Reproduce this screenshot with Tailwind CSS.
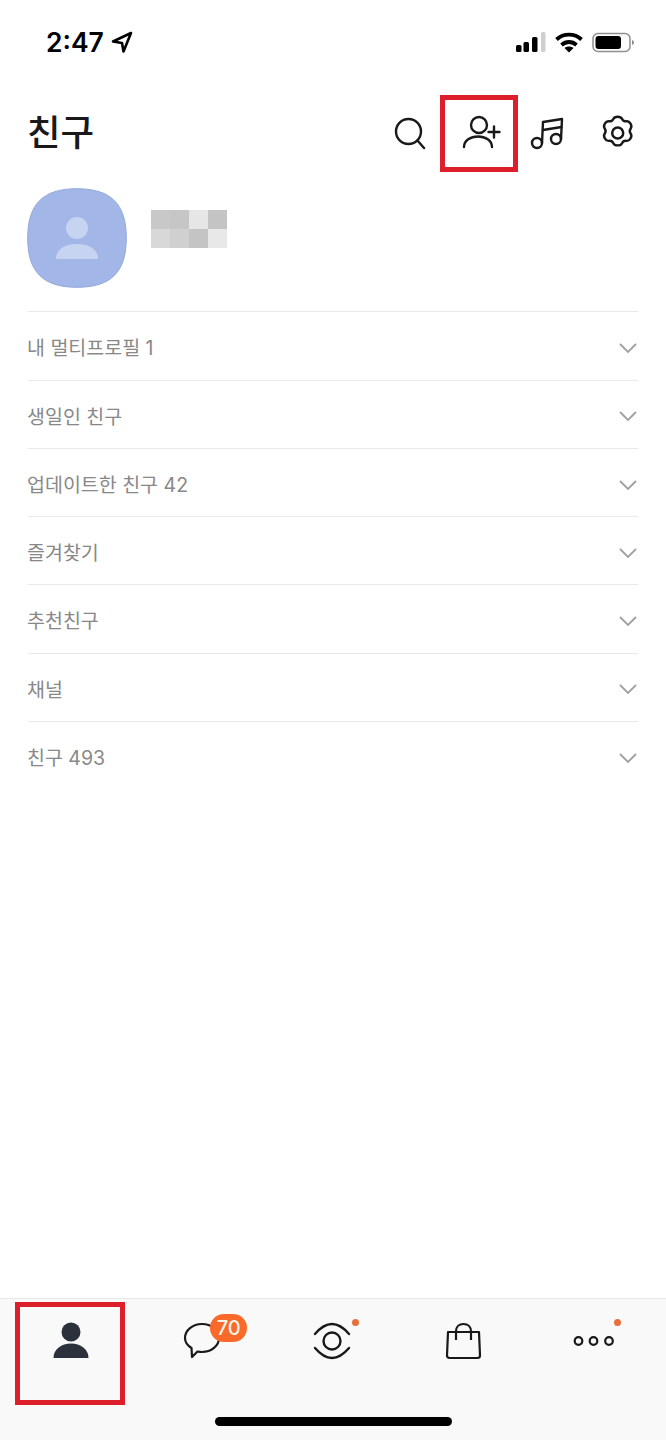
<!DOCTYPE html>
<html lang="ko">
<head>
  <meta charset="UTF-8" />
  <meta name="viewport" content="width=device-width, initial-scale=1.0" />
  <title>친구</title>
  <script src="https://cdn.jsdelivr.net/npm/@tailwindcss/browser@4"></script>
</head>
<body class="bg-white font-['Inter','Noto_Sans_CJK_KR',sans-serif]">
  <div class="relative flex h-[1440px] w-[666px] flex-col overflow-hidden">

    <!-- status bar -->
    <div class="flex h-[102px] items-start justify-between pl-[46px] pr-[30px] pt-[25px]">
      <div class="flex items-center gap-[6px]">
        <span class="text-[26.500px] leading-[34px] font-semibold text-black">2:47</span>
        <svg width="24" height="24" viewBox="0 0 24 24" fill="none" stroke="#000" stroke-width="2.600" stroke-linejoin="round"><path d="M21 3 3 11.500l9 1.500 1.500 8.500z"/></svg>
      </div>
      <div class="flex items-center gap-[9px] pt-[7px]">
        <svg width="30" height="22" viewBox="0 0 30 22"><rect x="0" y="13" width="5.500" height="7" rx="1.500" fill="#000"/><rect x="7.500" y="10" width="5.500" height="10" rx="1.500" fill="#000"/><rect x="16" y="5" width="5.500" height="15" rx="1.500" fill="#000"/><rect x="25" y="0" width="4.500" height="20" rx="1.500" fill="#cfcfcf"/></svg>
        <svg width="28" height="22" viewBox="0 0 28 22" fill="none" stroke="#000" stroke-width="3.800"><path d="M1.500 7.500c7-6.500 18-6.500 25 0"/><path d="M6.500 13c4.500-4 10.500-4 15 0"/><path d="M14 20.500l-4.500-4.500c2.500-2 6.500-2 9 0z" fill="#000" stroke="none"/></svg>
        <svg width="44" height="22" viewBox="0 0 44 22"><rect x="1" y="1.500" width="37" height="18" rx="5" fill="none" stroke="#8f8f8f" stroke-width="1.500"/><rect x="3.500" y="4" width="25.500" height="13" rx="3" fill="#000"/><path d="M40 8c1.500.4 2 1.300 2 2.500s-.5 2.100-2 2.500z" fill="#8f8f8f"/></svg>
      </div>
    </div>

    <!-- header -->
    <div class="flex h-[60px] items-center justify-between px-[28px]">
      <h1 class="-ml-[1px] pt-[1px] text-[36.500px] leading-[60px] font-medium text-[#191919]">친구</h1>
      <div class="flex items-center">
        <svg width="40" height="40" viewBox="0 0 40 40" fill="none" stroke="#191919" stroke-width="2.400" stroke-linecap="round"><circle cx="19.500" cy="19.500" r="12.500"/><path d="M28.500 28.500 35 36"/></svg>
        <svg class="ml-[32px]" width="40" height="40" viewBox="0 0 40 40" fill="none" stroke="#191919" stroke-width="2.400" stroke-linecap="round"><circle cx="18" cy="13" r="8"/><path d="M3 35c0-6.500 6.500-10.500 14-10.500S31 28.500 31 35"/><path d="M27.500 20h11M33 14.500v11"/></svg>
        <svg class="ml-[27px]" width="40" height="40" viewBox="0 0 40 40" fill="none" stroke="#191919" stroke-width="2.400" stroke-linecap="round" stroke-linejoin="round"><circle cx="9" cy="31" r="5"/><circle cx="28" cy="27" r="5"/><path d="M14 31 15 10 34 7 33 27"/><path d="M15 18 33.500 15"/></svg>
        <svg class="ml-[30px]" width="40" height="40" viewBox="0 0 40 40" fill="none" stroke="#191919" stroke-width="2.500" stroke-linejoin="round"><circle cx="19.700" cy="21" r="5.500"/><path transform="translate(.3 1.600) scale(.97)" d="M15.500 5.500c1.500-3 7.500-3 9 0 .8 1.700 2.700 2.700 4.600 2.400 3.300-.5 6.300 4.700 4.300 7.400-1.100 1.500-1.100 3.900 0 5.400 2 2.700-1 7.900-4.300 7.400-1.900-.3-3.800.7-4.600 2.400-1.500 3-7.500 3-9 0-.8-1.700-2.700-2.700-4.600-2.400-3.300.5-6.300-4.700-4.300-7.400 1.100-1.500 1.100-3.900 0-5.400-2-2.700 1-7.900 4.300-7.400 1.900.3 3.800-.7 4.600-2.400z"/></svg>
      </div>
    </div>

    <!-- my profile -->
    <div class="flex h-[149.450px] items-start gap-[24px] px-[27px] pt-[26px]">
      <svg width="100" height="100" viewBox="0 0 100 100">
        <path d="M50 .7C84 .7 99.300 16 99.300 50S84 99.300 50 99.300.7 84 .7 50 16 .7 50 .7z" fill="#a2b7e7" stroke="#92a8da" stroke-width="1"/>
        <circle cx="50" cy="40" r="11" fill="#c6d3f1"/>
        <path d="M29 71c0-10 9-15 21-15s21 5 21 15z" fill="#c6d3f1"/>
      </svg>
      <div class="mt-[22px] grid grid-cols-[repeat(4,19px)] grid-rows-[repeat(2,19px)]">
        <div class="bg-[#c8c8c8]"></div><div class="bg-[#c6c6c6]"></div><div class="bg-[#e6e6e6]"></div><div class="bg-[#c4c4c4]"></div>
        <div class="bg-[#d8d8d8]"></div><div class="bg-[#d0d0d0]"></div><div class="bg-[#c4c4c4]"></div><div class="bg-[#e8e8e8]"></div>
      </div>
    </div>

    <!-- sections -->
    <ul class="mx-[28px] flex-1 text-[19.500px] text-[#888888]">
      <li class="flex h-[68.250px] items-center justify-between border-t border-[#e9e9e9] pt-[4px]"><span class="-ml-[1px] pt-[2px]">내 멀티프로필 1</span><svg width="20" height="12" viewBox="0 0 20 12" fill="none" stroke="#a0a0a0" stroke-width="1.800"><path d="M2 2l8 8 8-8"/></svg></li>
      <li class="flex h-[68.250px] items-center justify-between border-t border-[#e9e9e9] pt-[4px]"><span class="-ml-[1px] pt-[2px]">생일인 친구</span><svg width="20" height="12" viewBox="0 0 20 12" fill="none" stroke="#a0a0a0" stroke-width="1.800"><path d="M2 2l8 8 8-8"/></svg></li>
      <li class="flex h-[68.250px] items-center justify-between border-t border-[#e9e9e9] pt-[4px]"><span class="-ml-[1px] pt-[2px]">업데이트한 친구 42</span><svg width="20" height="12" viewBox="0 0 20 12" fill="none" stroke="#a0a0a0" stroke-width="1.800"><path d="M2 2l8 8 8-8"/></svg></li>
      <li class="flex h-[68.250px] items-center justify-between border-t border-[#e9e9e9] pt-[4px]"><span class="-ml-[1px] pt-[2px]">즐겨찾기</span><svg width="20" height="12" viewBox="0 0 20 12" fill="none" stroke="#a0a0a0" stroke-width="1.800"><path d="M2 2l8 8 8-8"/></svg></li>
      <li class="flex h-[68.250px] items-center justify-between border-t border-[#e9e9e9] pt-[4px]"><span class="-ml-[1px] pt-[2px]">추천친구</span><svg width="20" height="12" viewBox="0 0 20 12" fill="none" stroke="#a0a0a0" stroke-width="1.800"><path d="M2 2l8 8 8-8"/></svg></li>
      <li class="flex h-[68.250px] items-center justify-between border-t border-[#e9e9e9] pt-[4px]"><span class="-ml-[1px] pt-[2px]">채널</span><svg width="20" height="12" viewBox="0 0 20 12" fill="none" stroke="#a0a0a0" stroke-width="1.800"><path d="M2 2l8 8 8-8"/></svg></li>
      <li class="flex h-[68.250px] items-center justify-between border-t border-[#e9e9e9] pt-[4px]"><span class="-ml-[1px] pt-[2px]">친구 493</span><svg width="20" height="12" viewBox="0 0 20 12" fill="none" stroke="#a0a0a0" stroke-width="1.800"><path d="M2 2l8 8 8-8"/></svg></li>
    </ul>

    <!-- tab bar -->
    <nav class="h-[142px] border-t border-[#e8e8e8] bg-[#f9f9f9]">
      <div class="grid grid-cols-5 px-[5px] pt-[17px]">
        <div class="flex justify-center">
          <svg width="48" height="48" viewBox="0 0 48 48" fill="#2b323c"><circle cx="24" cy="16" r="9.500"/><path d="M6.500 42c0-9 8-14.500 17.500-14.500S41.500 33 41.500 42z"/></svg>
        </div>
        <div class="relative flex justify-center">
          <svg width="48" height="48" viewBox="0 0 48 48" fill="none" stroke="#191919" stroke-width="2.200" stroke-linejoin="round"><path d="M24 8c9.400 0 17 6.300 17 14s-7.600 14-17 14c-1.600 0-3-.2-4.500-.5L14 41l-.5-9C9.500 29.500 7 26 7 22 7 14.300 14.600 8 24 8z"/></svg>
          <div class="absolute left-[74px] top-[-2px] flex h-[28px] w-[37px] items-center justify-center rounded-full bg-[#f96a2a] text-[20px] font-medium text-[#fdf3e6]">70</div>
        </div>
        <div class="relative flex justify-center">
          <svg width="48" height="48" viewBox="0 0 48 48" fill="none" stroke="#191919" stroke-width="2.400" stroke-linecap="round"><circle cx="23" cy="25" r="8.500"/><path d="M6 18Q23-2 40 18"/><path d="M6 32Q23 52 40 32"/></svg>
          <div class="absolute left-[85px] top-[3px] h-[7px] w-[7px] rounded-full bg-[#e8703a]"></div>
        </div>
        <div class="flex justify-center">
          <svg width="48" height="48" viewBox="0 0 48 48" fill="none" stroke="#191919" stroke-width="2.200" stroke-linejoin="round"><path d="M8 16h31l1 23.500c0 1.500-.8 2.500-2.500 2.500h-28C7.800 42 7 41 7 39.500z"/><path d="M16 24V15.500C16 11 19 8 23.500 8S31 11 31 15.500V24"/></svg>
        </div>
        <div class="relative flex justify-center">
          <svg width="48" height="48" viewBox="0 0 48 48" fill="none" stroke="#191919" stroke-width="2.200"><circle cx="7.500" cy="25" r="3.800"/><circle cx="22.500" cy="25" r="3.800"/><circle cx="38" cy="25" r="3.800"/></svg>
          <div class="absolute left-[84px] top-[3px] h-[7px] w-[7px] rounded-full bg-[#e8703a]"></div>
        </div>
      </div>
      <div class="mx-auto mt-[53px] h-[9px] w-[237px] rounded-full bg-black"></div>
    </nav>

    <!-- red annotation boxes -->
    <div class="absolute left-[440px] top-[95px] h-[77px] w-[78px] border-[5px] border-[#dc1f2b]"></div>
    <div class="absolute left-[15px] top-[1302px] h-[103px] w-[110px] border-[5px] border-[#dc1f2b]"></div>
  </div>
</body>
</html>
